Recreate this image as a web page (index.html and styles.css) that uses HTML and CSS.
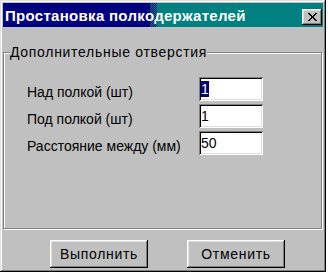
FILE: index.html
```html
<!DOCTYPE html>
<html lang="ru">
<head>
<meta charset="utf-8">
<title>Простановка полкодержателей</title>
<link rel="stylesheet" href="styles.css">
</head>
<body>
<div class="window">
  <div class="titlebar">
    <span class="title">Простановка полкодержателей</span>
    <button class="close" aria-label="Закрыть">
      <svg width="9" height="8" viewBox="0 0 9 8" shape-rendering="crispEdges"><path fill="#000" d="M0 0h2v1h-2z M7 0h2v1h-2z M1 1h2v1h-2z M6 1h2v1h-2z M2 2h2v1h-2z M5 2h2v1h-2z M3 3h3v2h-3z M2 5h2v1h-2z M5 5h2v1h-2z M1 6h2v1h-2z M6 6h2v1h-2z M0 7h2v1h-2z M7 7h2v1h-2z"/></svg>
    </button>
  </div>
  <div class="content">
    <fieldset class="group">
      <legend class="group-title">Дополнительные отверстия</legend>
      <div class="rows">
        <div class="row"><span class="label">Над полкой (шт)</span><div class="field"><span class="sel">1</span></div></div>
        <div class="row"><span class="label">Под полкой (шт)</span><div class="field"><span class="val">1</span></div></div>
        <div class="row"><span class="label">Расстояние между (мм)</span><div class="field"><span class="val">50</span></div></div>
      </div>
    </fieldset>
    <div class="actions">
      <button class="btn">Выполнить</button>
      <button class="btn">Отменить</button>
    </div>
  </div>
</div>
</body>
</html>
```
FILE: styles.css
```css
* { box-sizing: border-box; }
html, body { margin: 0; padding: 0; }
body {
  background: #fff;
  width: 328px;
  height: 276px;
  font-family: "Liberation Sans", Arial, sans-serif;
  font-size: 14px;
  color: #000;
  overflow: hidden;
}
.window {
  width: 326px;
  height: 272px;
  background: #c0c0c0;
  padding: 3px;
  display: flex;
  flex-direction: column;
  box-shadow: inset -1px -1px 0 #000, inset 1px 1px 0 #dfdfdf, inset -2px -2px 0 #808080, inset 2px 2px 0 #fff;
}
.titlebar {
  height: 24px;
  flex: none;
  display: flex;
  align-items: center;
  justify-content: space-between;
  padding: 0 1px 0 2px;
  color: #fff;
  background:
    linear-gradient(to right, #000080 0 147px, transparent 147px 154px, #008080 154px),
    repeating-conic-gradient(#000080 0 25%, #008080 0 50%) 0 0 / 2px 2px;
}
.title {
  font-weight: bold;
  font-size: 15px;
  letter-spacing: 0.3px;
  line-height: 18px;
  padding-top: 1px;
  white-space: nowrap;
}
.close {
  width: 20px;
  height: 16px;
  padding: 0;
  border: none;
  align-self: flex-end;
  margin-bottom: 2px;
  background: #c0c0c0;
  display: flex;
  align-items: center;
  justify-content: center;
  box-shadow: inset -1px -1px 0 #000, inset 1px 1px 0 #fff, inset -2px -2px 0 #808080, inset 2px 2px 0 #dfdfdf;
}
.close svg { display: block; }
.content {
  flex: 1;
  display: flex;
  flex-direction: column;
}
.group {
  margin: 17px 0 0 0;
  width: 319px;
  height: 185px;
  padding: 16px 0 0 0;
  border: 1px solid #808080;
  box-shadow: inset 1px 1px 0 #fff, 1px 1px 0 #fff;
  min-width: 0;
}
.group-title {
  margin-left: 6px;
  padding: 0;
  line-height: 17px;
  letter-spacing: 0.7px;
  background: #c0c0c0;
}
.rows {
  padding-left: 23px;
  display: flex;
  flex-direction: column;
  gap: 3px;
}
.row {
  display: flex;
  align-items: center;
  height: 24px;
}
.label {
  width: 172px;
  line-height: 16px;
  padding-top: 6px;
  white-space: nowrap;
}
.field {
  width: 64px;
  height: 24px;
  background: #fff;
  display: flex;
  align-items: center;
  padding-left: 2px;
  box-shadow: inset 1px 1px 0 #808080, inset -1px -1px 0 #fff, inset 2px 2px 0 #000, inset -2px -2px 0 #dfdfdf;
}
.sel, .val { line-height: 16px; }
.sel { background: #000080; color: #fff; }
.actions {
  margin-top: 11px;
  padding-left: 47px;
  display: flex;
  gap: 39px;
}
.btn {
  width: 98px;
  height: 28px;
  padding: 0;
  border: none;
  background: #c0c0c0;
  font-family: "Liberation Sans", Arial, sans-serif;
  font-size: 14px;
  letter-spacing: 0.7px;
  color: #000;
  box-shadow: inset -1px -1px 0 #000, inset 1px 1px 0 #fff, inset -2px -2px 0 #808080, inset 2px 2px 0 #dfdfdf;
}
```
